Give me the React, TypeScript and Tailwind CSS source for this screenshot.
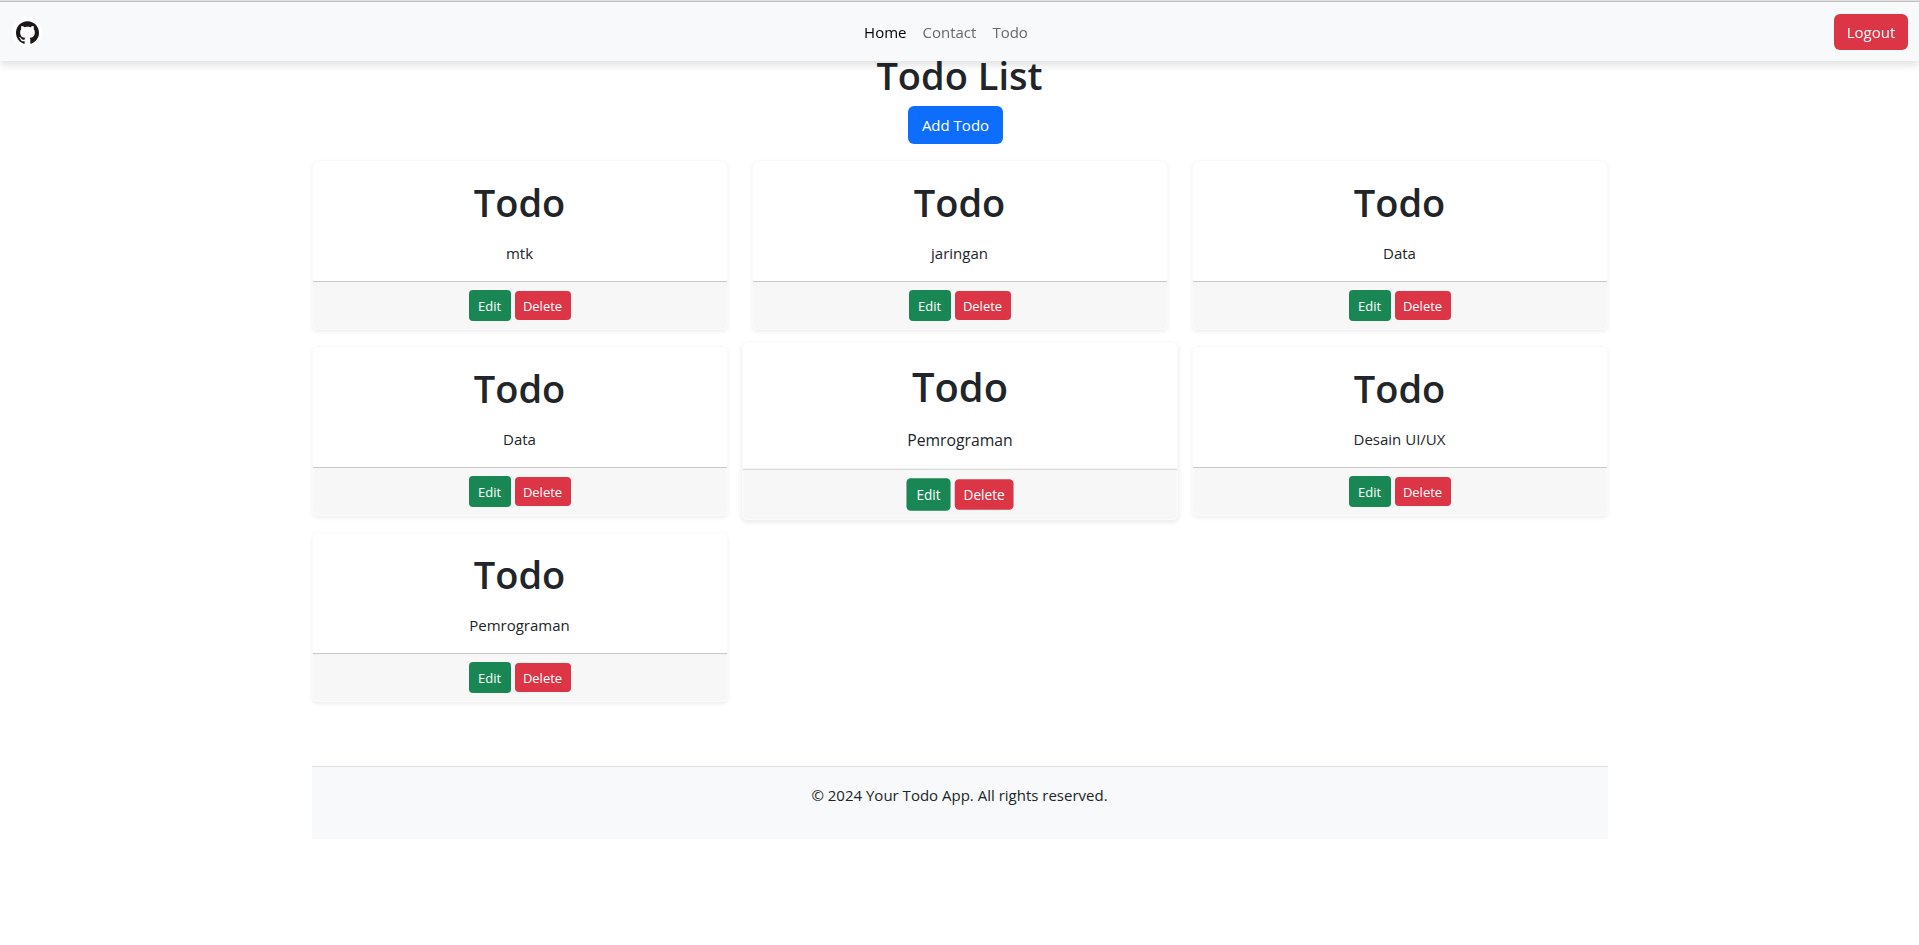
import { SiGithub } from "react-icons/si";

type Todo = { id: number; text: string; raised?: boolean };

const todos: Todo[] = [
  { id: 1, text: "mtk" },
  { id: 2, text: "jaringan" },
  { id: 3, text: "Data" },
  { id: 4, text: "Data" },
  { id: 5, text: "Pemrograman", raised: true },
  { id: 6, text: "Desain UI/UX" },
  { id: 7, text: "Pemrograman" },
];

function Navbar() {
  return (
    <header className="fixed inset-x-0 top-0 z-10 border-t border-[#e0e0e0] bg-[#f8f9fa] shadow-[0_4px_8px_rgba(0,0,0,0.12)]">
      <nav className="flex items-center border-t border-[#bdbdbd] pt-3 pr-[11px] pb-[11px] pl-3">
        <a
          href="#"
          aria-label="GitHub"
          className="mr-4 flex size-[30px] items-center justify-center rounded-full bg-white text-[#1b1817]"
        >
          <SiGithub className="size-[23px]" />
        </a>
        <div className="mx-auto flex gap-4 leading-6">
          <a href="#home" className="text-black">
            Home
          </a>
          <a href="#contact" className="text-[#676869]">
            Contact
          </a>
          <a href="#todo" className="text-[#676869]">
            Todo
          </a>
        </div>
        <button type="button" className="h-9 w-[74px] rounded-md bg-[#dc3545] text-white">
          Logout
        </button>
      </nav>
    </header>
  );
}

function TodoCard({ todo }: { todo: Todo }) {
  return (
    <article
      className={`rounded-md border border-black/[0.02] bg-white text-center shadow-[0_2px_4px_rgba(0,0,0,0.07)] transition-transform hover:scale-105 ${
        todo.raised ? "scale-105" : ""
      }`}
    >
      <div className="border-b border-[#c8c8c8] p-4">
        <h2 className="mb-[14px] text-[38px] leading-[50px] font-semibold">Todo</h2>
        <p>{todo.text}</p>
      </div>
      <div className="flex items-center justify-center gap-1 rounded-b-md bg-[#f7f7f7] py-2 text-[13px] text-white">
        <button type="button" className="h-[31px] w-[42px] rounded bg-[#198754]">
          Edit
        </button>
        <button type="button" className="h-[29px] w-14 rounded bg-[#dc3545]">
          Delete
        </button>
      </div>
    </article>
  );
}

export default function App() {
  return (
    <div className="font-['Open_Sans','Noto_Sans',sans-serif] text-[15px] leading-6 text-[#212529]">
      <Navbar />
      <div className="mx-auto max-w-[1320px] px-3 pt-[50px]">
        <main>
          <div className="mb-4 text-center">
            <h1 className="mb-[6px] text-[38px] leading-[50px] font-semibold">Todo List</h1>
            <button type="button" className="mr-2 h-[38px] w-[95px] rounded-md bg-[#0d6efd] align-top text-white">
              Add Todo
            </button>
          </div>
          <div className="grid grid-cols-1 gap-x-6 gap-y-4 md:grid-cols-3">
            {todos.map((todo) => (
              <TodoCard key={todo.id} todo={todo} />
            ))}
          </div>
        </main>
        <footer className="mt-16 border-t border-[#dee2e6] bg-[#f8f9fa] pt-4 pb-8 text-center">
          <p>© 2024 Your Todo App. All rights reserved.</p>
        </footer>
      </div>
    </div>
  );
}
